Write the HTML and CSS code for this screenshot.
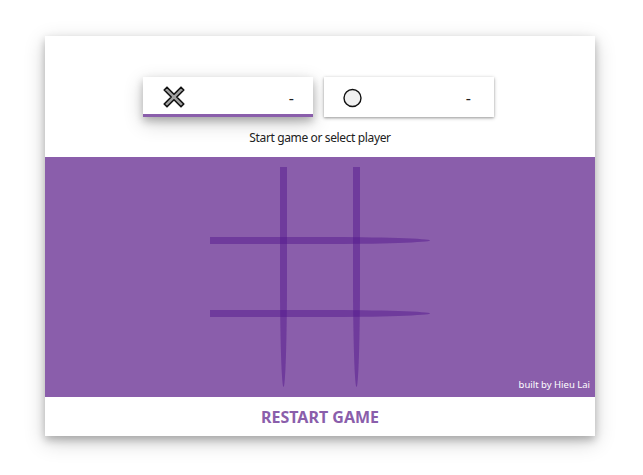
FILE: index.html
```html
<!DOCTYPE html>
<html lang="en">
<head>
<meta charset="utf-8">
<title>Tic Tac Toe</title>
<link rel="stylesheet" href="styles.css">
</head>
<body>
<main class="game">
  <header class="scoreboard">
    <div class="players">
      <div class="player player-active">
        <svg class="mark" viewBox="0 0 22 22"><path d="M4 1.2L11 8.2L18 1.2L20.8 4L13.8 11L20.8 18L18 20.8L11 13.8L4 20.8L1.2 18L8.2 11L1.2 4Z" fill="#a0a0a0" stroke="#111" stroke-width="1.6" stroke-linejoin="round"/></svg>
        <span class="score">-</span>
      </div>
      <div class="player">
        <svg class="mark" viewBox="0 0 22 22"><circle cx="10.5" cy="12" r="8.5" fill="#f0f0f0" stroke="#111" stroke-width="1.4"/></svg>
        <span class="score">-</span>
      </div>
    </div>
    <p class="status">Start game or select player</p>
  </header>
  <section class="board">
    <div class="grid">
      <i class="line col col-1"></i>
      <i class="line col col-2"></i>
      <i class="line row row-1"></i>
      <i class="line row row-2"></i>
    </div>
    <small class="credit">built by Hieu Lai</small>
  </section>
  <button class="restart" type="button">RESTART GAME</button>
</main>
</body>
</html>
```

FILE: styles.css
```css
* { box-sizing: border-box; }

body {
  margin: 0;
  padding-top: 36px;
  height: 475px;
  overflow: hidden;
  background: #fff;
  color: #212121;
  font-family: "Noto Sans", "Open Sans", sans-serif;
}

.game {
  display: flex;
  flex-direction: column;
  width: 550px;
  height: 400px;
  margin-left: 45px;
  background: #fff;
  box-shadow: 0 4px 8px rgba(0, 0, 0, .24), 0 6px 20px rgba(0, 0, 0, .19);
}

.scoreboard {
  height: 121px;
  padding-top: 41px;
}

.players {
  display: flex;
  gap: 11px;
  padding-left: 98px;
}

.player {
  display: flex;
  align-items: center;
  justify-content: space-between;
  width: 170px;
  height: 40px;
  padding: 0 23px 0 18px;
  background: #fff;
  box-shadow: 0 1px 4px rgba(0, 0, 0, .24), 0 1px 2px rgba(0, 0, 0, .22);
}

.player-active {
  padding: 3px 19px 0 20px;
  border-bottom: 3px solid #8a5eab;
  box-shadow: 0 4px 8px rgba(0, 0, 0, .24), 0 6px 20px rgba(0, 0, 0, .19);
}

.mark { width: 22px; height: 22px; }

.score {
  padding-top: 2px;
  font-size: 16px;
  line-height: 20px;
}

.status {
  margin: 11px 0 0;
  font-size: 12px;
  line-height: 20px;
  letter-spacing: -.37px;
  text-align: center;
}

.board {
  position: relative;
  height: 240px;
  padding-top: 10px;
  background: #8a5eab;
}

.grid {
  position: relative;
  width: 220px;
  height: 220px;
  margin: 0 auto;
}

.line {
  position: absolute;
  background: rgba(84, 24, 141, .5);
}

.col {
  top: 0;
  width: 7px;
  height: 220px;
  border-radius: 0 0 50% 50%;
}

.row {
  left: 0;
  width: 220px;
  height: 7px;
  border-radius: 0 50% 50% 0;
}

.col-1 { left: 70px; }
.col-2 { left: 143px; }
.row-1 { top: 70px; }
.row-2 { top: 143px; }

.credit {
  position: absolute;
  right: 5px;
  bottom: 5px;
  color: #fff;
  font-size: 9.5px;
  line-height: 14px;
}

.restart {
  height: 39px;
  padding: 2px 0 0;
  border: 0;
  background: transparent;
  color: #8a5eab;
  font: 700 16px/37px "Noto Sans", "Open Sans", sans-serif;
}
```
